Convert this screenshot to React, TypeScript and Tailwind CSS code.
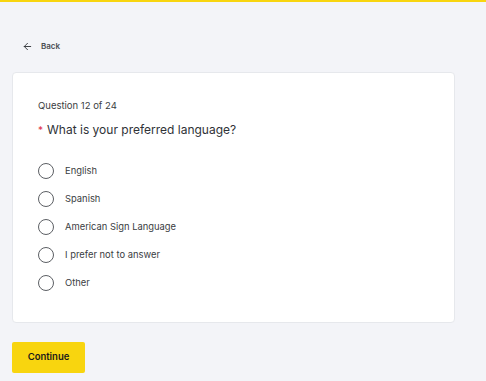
import { ArrowLeft } from 'lucide-react';

const options = ['English', 'Spanish', 'American Sign Language', 'I prefer not to answer', 'Other'];

export default function App() {
  return (
    <div className="min-h-screen w-full bg-[#f3f4f8] border-t-2 border-[#f8d50f] font-['Inter',sans-serif] text-[#2f3237]">
      <div className="pl-[12px] pr-[31px] pt-[38px]">
        <button className="flex items-center gap-[8px] pl-[10px] text-[8px] font-semibold text-[#4a4d52]">
          <ArrowLeft className="w-[11px] h-[11px] text-[#2f3237]" strokeWidth={2} />
          Back
        </button>
        <div className="mt-[20px] h-[251px] bg-white rounded-[4px] border border-[#e6e8ec] pl-[25px] pt-[26px]">
          <p className="text-[9.5px] text-[#3a3d42]">Question 12 of 24</p>
          <h1 className="mt-[8px] flex items-baseline gap-[4px] text-[12px] text-[#2f3237]">
            <span className="text-[#e0334a] text-[10px]">*</span>
            What is your preferred language?
          </h1>
          <div className="mt-[24px] flex flex-col gap-[12px]">
            {options.map((o) => (
              <label key={o} className="flex items-center gap-[11px]">
                <span className="w-[16px] h-[16px] rounded-full border border-[#5c5f64] bg-white" />
                <span className="text-[9.4px] text-[#3a3d42]">{o}</span>
              </label>
            ))}
          </div>
        </div>
        <button className="mt-[19px] w-[73px] h-[31px] rounded-[2px] bg-[#f8d50f] text-[9.5px] font-semibold text-[#1a1a1a]">
          Continue
        </button>
      </div>
    </div>
  );
}
